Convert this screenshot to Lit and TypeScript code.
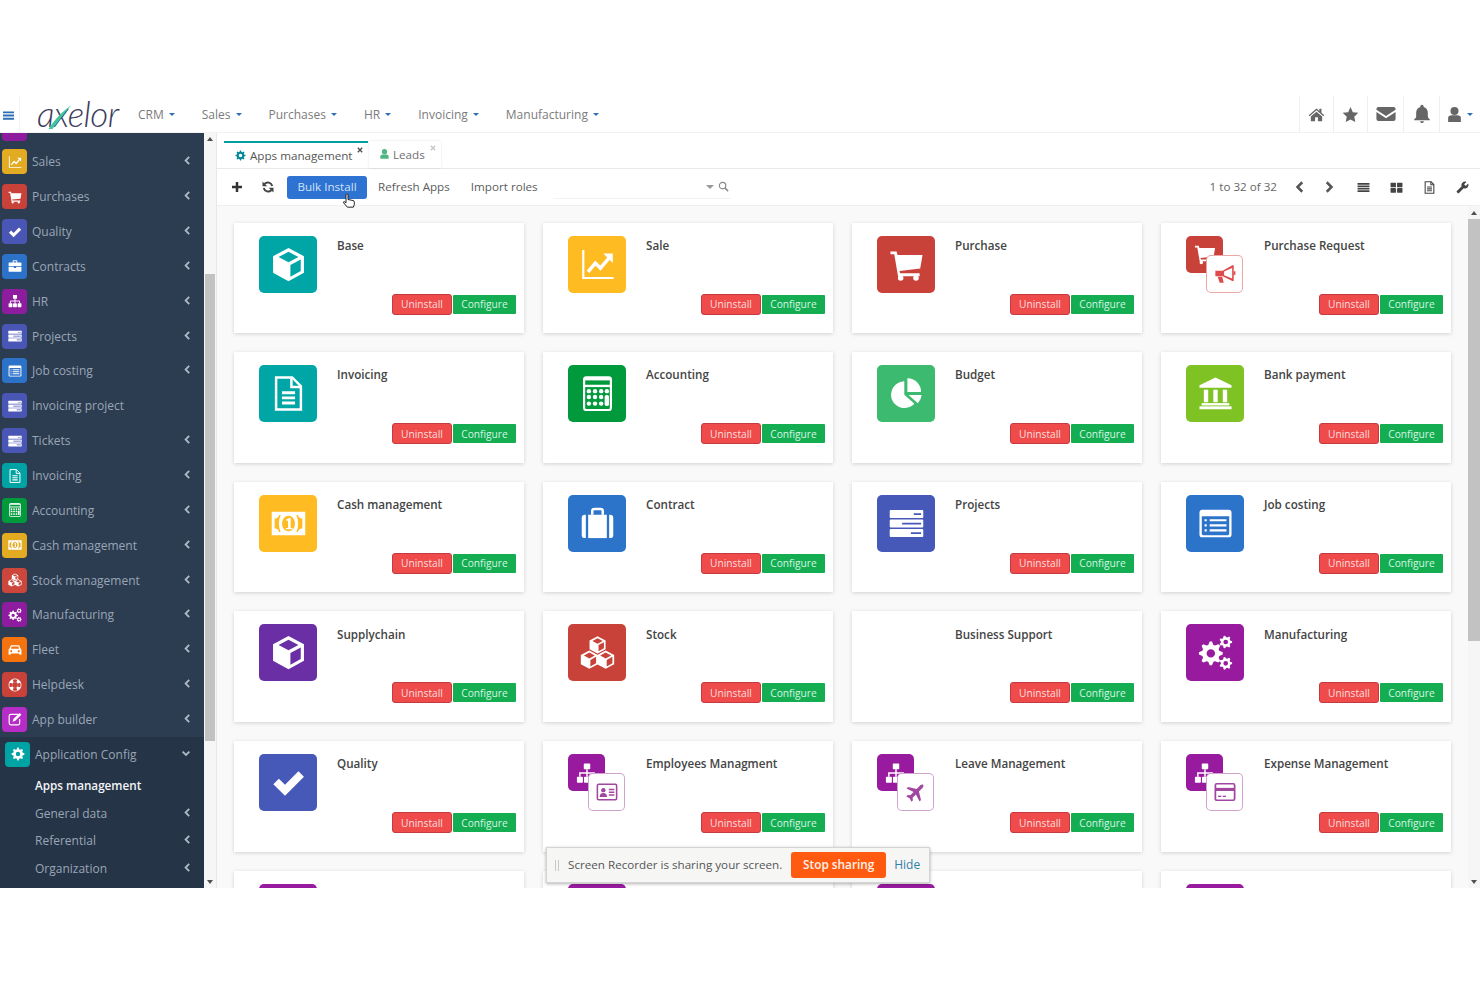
import { LitElement, html, css, svg } from "lit";
import { customElement } from "lit/decorators.js";

function gearPath(cx: number, cy: number, r: number, hole: number, teeth = 8) {
  const pts: string[] = [];
  const n = teeth * 4;
  for (let i = 0; i < n; i++) {
    const a = ((i - 0.5) / n) * Math.PI * 2;
    const outer = i % 4 === 0 || i % 4 === 1;
    const rad = outer ? r : r * 0.74;
    pts.push(`${(cx + Math.cos(a) * rad).toFixed(2)} ${(cy + Math.sin(a) * rad).toFixed(2)}`);
  }
  return `M${pts.join("L")}Z M${cx - hole} ${cy}a${hole} ${hole} 0 1 0 ${hole * 2} 0a${hole} ${hole} 0 1 0 ${-hole * 2} 0Z`;
}

const cube = "M12 .6L22.6 6.3V17.7L12 23.4L1.4 17.7V6.3Z M12 3.2L5.2 6.900L12 10.500L18.800 6.900Z M13.300 12.300V20.400L20.400 16.500V8.500Z";

const icons: Record<string, unknown> = {
  cube: svg`<path fill-rule="evenodd" d=${cube}/>`,
  chart: svg`<path d="M1.5 2h1.5v18.5H23V22H1.5Z"/><path d="M5.5 17L10.5 11L14 14.5L20 7.5" fill="none" stroke="currentColor" stroke-width="2.4"/><path d="M16 4.5H22.5V11Z"/>`,
  cart: svg`<path d="M1 3h4.2l.7 2.4H23l-1.600 9.400-14.200 1.600.4 1.600H21v2H6.200L3.600 5H1Z"/><circle cx="8" cy="21.300" r="1.900"/><circle cx="18.500" cy="21.300" r="1.900"/>`,
  doc: svg`<g fill="none" stroke="currentColor" stroke-width="1.700"><path d="M3.500 1H14.500L20.500 7V23H3.500Z"/><path d="M14 1V7.500H20.500"/><path d="M7.500 11.500H16.500M7.500 15H16.500M7.500 18.500H16.500" stroke-width="2"/></g>`,
  calc: svg`<rect x="2.800" y="1" width="18.400" height="22.400" rx="1.600" fill="none" stroke="currentColor" stroke-width="1.500"/><rect x="2.800" y="1" width="18.400" height="2"/><rect x="2.800" y="6" width="18.400" height="1.600"/>
    ${[10.400, 14.400, 18.900].map((y) => [6.100, 10.300, 14.500].map((x) => svg`<circle cx=${x} cy=${y} r="1.500"/>`))}
    <circle cx="18.400" cy="10.400" r="1.500"/><rect x="16.900" y="13" width="3" height="7.500" rx="1.200"/>`,
  pie: svg`<path d="M10.500 12.800V3.600A9.200 9.200 0 1 0 17.400 19Z"/><path d="M12.600 1.600A9.400 9.400 0 0 1 22 11H12.600Z"/><path d="M13.400 13H22.400A9.400 9.400 0 0 1 19.800 18.600Z"/>`,
  bank: svg`<path d="M12 1L23 6.400V8H1V6.400Z"/><rect x="4" y="9.400" width="3" height="8.600"/><rect x="10.500" y="9.400" width="3" height="8.600"/><rect x="17" y="9.400" width="3" height="8.600"/><rect x="2.500" y="18.600" width="19" height="1.600"/><rect x="1" y="20.800" width="22" height="2"/>`,
  money: svg`<path fill-rule="evenodd" d="M.5 4H23.500V20H.5Z M12 6.600a4.400 5.400 0 1 0 .01 0Z M5.500 6.200Q5.200 8.400 2.500 8.700V15.300Q5.200 15.600 5.500 17.800H6.600Q5.400 15 5.400 12T6.600 6.200Z M18.500 6.200H17.400Q18.600 9 18.600 12T17.400 17.800H18.500Q18.800 15.600 21.500 15.300V8.700Q18.800 8.400 18.500 6.200Z"/><path d="M10.400 9.300L12.600 8.300H13.500V15H14.700V16H10.200V15H11.700V9.900L10.600 10.200Z"/>`,
  suitcase: svg`<path d="M8.400 6V3.400Q8.400 2 9.800 2H14.200Q15.600 2 15.600 3.400V6" fill="none" stroke="currentColor" stroke-width="1.700"/><rect x="5.600" y="6" width="12.800" height="16"/><path d="M4 6V22H3.400A2.200 2.200 0 0 1 1.200 19.800V8.200A2.200 2.200 0 0 1 3.400 6Z M20 6V22H20.600A2.200 2.200 0 0 0 22.800 19.800V8.200A2.200 2.200 0 0 0 20.600 6Z"/>`,
  briefcase: svg`<path fill-rule="evenodd" d="M8 6V3.500Q8 2 9.500 2H14.500Q16 2 16 3.500V6H22Q23 6 23 7V12H1V7Q1 6 2 6Z M9.700 3.700V6H14.300V3.700Z"/><path d="M1 13.400H10V15.500H14V13.400H23V20.500Q23 22 21.500 22H2.500Q1 22 1 20.500Z"/>`,
  tasks: svg`<path fill-rule="evenodd" d="M1.200 2.800H22.800Q23.500 2.800 23.500 3.500V7.600Q23.500 8.300 22.800 8.300H1.200Q.5 8.300 .5 7.600V3.500Q.5 2.800 1.200 2.800Z M17 5V6.200H22V5Z M1.200 9.300H22.800Q23.500 9.300 23.500 10V14.100Q23.500 14.800 22.800 14.800H1.200Q.5 14.800 .5 14.100V10Q.5 9.300 1.200 9.300Z M9 11.500V12.700H22V11.500Z M1.200 15.800H22.800Q23.500 15.800 23.500 16.500V20.600Q23.500 21.300 22.800 21.300H1.200Q.5 21.300 .5 20.600V16.500Q.5 15.800 1.200 15.800Z M15 18V19.200H22V18Z"/>`,
  listalt: svg`<path fill-rule="evenodd" d="M3 2.500H21Q23 2.500 23 4.500V19.500Q23 21.500 21 21.500H3Q1 21.500 1 19.500V4.500Q1 2.500 3 2.500Z M2.600 7V19Q2.600 20 3.600 20H20.400Q21.400 20 21.400 19V7Z"/><path d="M4.500 9H6V10.500H4.500Z M8 9H19.500V10.500H8Z M4.500 12.500H6V14H4.500Z M8 12.500H19.500V14H8Z M4.500 16H6V17.500H4.500Z M8 16H19.500V17.500H8Z"/>`,
  cubes: svg`<g fill-rule="evenodd"><path transform="translate(5.800 .5) scale(.52)" d=${cube}/><path transform="translate(-.2 10.300) scale(.55)" d=${cube}/><path transform="translate(11 10.300) scale(.55)" d=${cube}/></g>`,
  gears: svg`<path fill-rule="evenodd" d=${gearPath(8.800, 12.600, 8.200, 2.900)}/><path fill-rule="evenodd" d=${gearPath(19, 4.800, 4.400, 1.600, 7)}/><path fill-rule="evenodd" d=${gearPath(19, 19.400, 4.400, 1.600, 7)}/>`,
  cog: svg`<path fill-rule="evenodd" d=${gearPath(12, 12, 11, 3.800)}/>`,
  check: svg`<path d="M1.600 13.200L5.400 9.400L9.600 13.600L18.800 4.200L22.600 8L9.600 21Z"/>`,
  sitemap: svg`<rect x="8.500" y="1.500" width="7" height="6.500" rx=".8"/><rect x="1" y="16" width="6.500" height="6.500" rx=".8"/><rect x="8.700" y="16" width="6.500" height="6.500" rx=".8"/><rect x="16.500" y="16" width="6.500" height="6.500" rx=".8"/><path d="M12 8V16M4.200 16V12H19.800V16" fill="none" stroke="currentColor" stroke-width="1.600"/>`,
  bullhorn: svg`<path fill-rule="evenodd" d="M1.500 8.500H9.500L20 2.500H21.500V19.500H20L9.500 14.500H1.500Z M11 9.400V13.400L19.800 17V5.400Z"/><rect x="21.500" y="9" width="1.800" height="4"/><path d="M4 15H9L10.600 21.500H6.200Z"/>`,
  idcard: svg`<rect x="1.500" y="3.500" width="21" height="17" rx="1.400" fill="none" stroke="currentColor" stroke-width="1.700"/><circle cx="8" cy="10" r="2.400"/><path d="M4 17.500Q4 13 8 13T12 17.500Z"/><path d="M14 8.500H20V10H14Z M14 11.500H20V13H14Z M14 14.500H20V16H14Z"/>`,
  plane: svg`<path transform="rotate(45 12 12)" d="M22 16.500v-2.200l-8.200-5V3.500C13.800 2.500 13 1 12 1s-1.800 1.500-1.800 2.500v5.800L2 14.300v2.200l8.200-2.600V19l-2.200 1.700V23l4-1.200 4 1.200v-2.300L13.800 19v-5.100z"/>`,
  card: svg`<rect x="1.500" y="3" width="21" height="18" rx="1.600" fill="none" stroke="currentColor" stroke-width="1.900"/><rect x="1.500" y="7.500" width="21" height="3.400"/><rect x="4.500" y="16" width="3.500" height="1.500"/><rect x="9.500" y="16" width="3.500" height="1.500"/>`,
  car: svg`<path fill-rule="evenodd" d="M6 4H18Q19.500 4 20 5.500L21.600 10Q23 10.800 23 12.500V20H19.500V18H4.500V20H1V12.500Q1 10.800 2.400 10L4 5.500Q4.500 4 6 4Z M6.200 6.200L5 10H19L17.800 6.200Z M5.500 12.200a1.800 1.800 0 1 0 .01 0Z M18.500 12.200a1.800 1.800 0 1 0 .01 0Z"/>`,
  lifering: svg`<path fill-rule="evenodd" d="M12 1a11 11 0 1 0 .01 0Z M12 7a5 5 0 1 0 .01 0Z M8 3.200L9.600 7.400H14.400L16 3.200A10 10 0 0 0 8 3.200Z M3.200 8L7.400 9.600V14.400L3.200 16A10 10 0 0 1 3.200 8Z M20.800 8L16.600 9.600V14.400L20.800 16A10 10 0 0 0 20.800 8Z M8 20.800L9.600 16.600H14.400L16 20.800A10 10 0 0 1 8 20.800Z"/>`,
  edit: svg`<path d="M18 4H5Q2 4 2 7V19Q2 22 5 22H17Q20 22 20 19V12" fill="none" stroke="currentColor" stroke-width="2"/><path d="M20 1.500L23 4.500L12.500 15L8 16.500L9.500 11.500Z"/>`,
  home: svg`<path d="M12 3.500L1 13l1.200 1.400L12 6l9.800 8.400L23 13l-4-3.500V4h-3v3Z"/><path d="M12 8L4 14.800V21.500H10V16H14V21.500H20V14.800Z"/>`,
  star: svg`<path d="M12 1.500L15.300 8.700L23 9.600L17.300 15L18.800 22.700L12 18.900L5.200 22.700L6.700 15L1 9.600L8.700 8.700Z"/>`,
  mail: svg`<path d="M3 3.500H21Q23.500 3.500 23.500 6V7L12 14.500L.5 7V6Q.5 3.500 3 3.500Z"/><path d="M.5 9.500L12 17L23.500 9.500V18Q23.500 20.500 21 20.500H3Q.5 20.500 .5 18Z"/>`,
  bell: svg`<path d="M12 22.800c1.300 0 2.300-1 2.300-2.200H9.700c0 1.200 1 2.200 2.300 2.200zM19 15V10.500c0-3.500-2-6-5-6.800V3c0-1.100-.9-2-2-2s-2 .9-2 2v.7c-3 .8-5 3.300-5 6.800V15c0 1.200-1 2.500-2.500 3.500V19.500h19V18.500C20 17.500 19 16.200 19 15z"/>`,
  user: svg`<circle cx="12" cy="7" r="5.700"/><path d="M3 22.500V17Q3 13 8 13H16Q21 13 21 17V22.500Z"/>`,
  list: svg`<path d="M1 3.500H23V7H1Z M1 8.500H23V11H1Z M1 12.500H23V15.500H1Z M1 17H23V20.500H1Z"/>`,
  grid: svg`<rect x="1" y="3" width="10" height="8.500" rx=".8"/><rect x="13" y="3" width="10" height="8.500" rx=".8"/><rect x="1" y="13" width="10" height="8.500" rx=".8"/><rect x="13" y="13" width="10" height="8.500" rx=".8"/>`,
  wrench: svg`<path transform="matrix(-1 0 0 1 24 0)" d="M22.700 19l-9.100-9.100c.9-2.300.4-5-1.500-6.900-2-2-5-2.400-7.400-1.300L9 6 6 9 1.600 4.700C.4 7.100.9 10.100 2.900 12.100c1.900 1.900 4.600 2.400 6.900 1.500l9.100 9.100c.4.4 1 .4 1.400 0l2.300-2.300c.5-.4.5-1.100.1-1.400z"/>`,
  plus: svg`<path d="M9.500 2H14.500V9.500H22V14.500H14.500V22H9.500V14.500H2V9.500H9.500Z"/>`,
  refresh: svg`<path d="M20.500 10A9 9 0 0 0 5 6" fill="none" stroke="currentColor" stroke-width="3.800"/><path d="M3.500 14A9 9 0 0 0 19 18" fill="none" stroke="currentColor" stroke-width="3.800"/><path d="M1 1V10.500H10.500Z M23 23V13.500H13.500Z"/>`,
  search: svg`<circle cx="10" cy="10" r="7" fill="none" stroke="currentColor" stroke-width="2.600"/><path d="M15 15L22 22" stroke="currentColor" stroke-width="3.400" fill="none"/>`,
  bars: svg`<path d="M0 3H24V7H0Z M0 10H24V14H0Z M0 17H24V21H0Z"/>`,
  left: svg`<path d="M16.500 2.500L7 12L16.500 21.500" fill="none" stroke="currentColor" stroke-width="5"/>`,
  right: svg`<path d="M7.500 2.500L17 12L7.500 21.500" fill="none" stroke="currentColor" stroke-width="5"/>`,
  down: svg`<path d="M3 7L12 16L21 7" fill="none" stroke="currentColor" stroke-width="5"/>`,
  close: svg`<path d="M4 7L7 4L12 9L17 4L20 7L15 12L20 17L17 20L12 15L7 20L4 17L9 12Z"/>`,
  hand: svg`<path d="M9.500 22L4 15.500Q3 13.800 4.800 13.500L7.500 15.500V4Q7.500 2 9 2T10.500 4V10.500L18 12Q20 12.500 20 14.500V18L18.500 22Z" fill="#fff" stroke="#222" stroke-width="1.500"/>`,
  file: svg`<g fill="none" stroke="currentColor" stroke-width="2"><path d="M4 1.500H15L20 6.500V22.500H4Z"/><path d="M14.500 1.500V7H20"/><path d="M7.500 11H16.500M7.500 14.500H16.500M7.500 18H16.500"/></g>`,
};

const ic = (name: string) => html`<svg class="i" viewBox="0 0 24 24" fill="currentColor" aria-hidden="true">${icons[name]}</svg>`;

interface Side { n: string; c: string; i: string; chev?: boolean }
const side: Side[] = [
  { n: "Sales", c: "#e3ab22", i: "chart" },
  { n: "Purchases", c: "#c9423a", i: "cart" },
  { n: "Quality", c: "#4a56b6", i: "check" },
  { n: "Contracts", c: "#2c72c9", i: "briefcase" },
  { n: "HR", c: "#8d1c9e", i: "sitemap" },
  { n: "Projects", c: "#4a56b6", i: "tasks" },
  { n: "Job costing", c: "#2c72c9", i: "listalt" },
  { n: "Invoicing project", c: "#4a56b6", i: "tasks", chev: false },
  { n: "Tickets", c: "#4a56b6", i: "tasks" },
  { n: "Invoicing", c: "#00a3a3", i: "doc" },
  { n: "Accounting", c: "#009a3d", i: "calc" },
  { n: "Cash management", c: "#e3ab22", i: "money" },
  { n: "Stock management", c: "#cc463c", i: "cubes" },
  { n: "Manufacturing", c: "#8d1c9e", i: "gears" },
  { n: "Fleet", c: "#f4730f", i: "car" },
  { n: "Helpdesk", c: "#c9423a", i: "lifering" },
  { n: "App builder", c: "#b52cc6", i: "edit" },
];

interface App { n: string; c?: string; i?: string; o?: string; oc?: string }
const P = "#981b9f";
const apps: App[] = [
  { n: "Base", c: "#00a6a6", i: "cube" },
  { n: "Sale", c: "#ffbb22", i: "chart" },
  { n: "Purchase", c: "#c9423a", i: "cart" },
  { n: "Purchase Request", c: "#c9423a", i: "cart", o: "bullhorn", oc: "#dd4b4b" },
  { n: "Invoicing", c: "#00a6a6", i: "doc" },
  { n: "Accounting", c: "#009a3d", i: "calc" },
  { n: "Budget", c: "#3cba6f", i: "pie" },
  { n: "Bank payment", c: "#7fc224", i: "bank" },
  { n: "Cash management", c: "#ffbb22", i: "money" },
  { n: "Contract", c: "#2b74c9", i: "suitcase" },
  { n: "Projects", c: "#4658b8", i: "tasks" },
  { n: "Job costing", c: "#2b74c9", i: "listalt" },
  { n: "Supplychain", c: "#6b2fa5", i: "cube" },
  { n: "Stock", c: "#c9423a", i: "cubes" },
  { n: "Business Support" },
  { n: "Manufacturing", c: P, i: "gears" },
  { n: "Quality", c: "#4658b8", i: "check" },
  { n: "Employees Managment", c: P, i: "sitemap", o: "idcard", oc: "#a2479f" },
  { n: "Leave Management", c: P, i: "sitemap", o: "plane", oc: "#a2479f" },
  { n: "Expense Management", c: P, i: "sitemap", o: "card", oc: "#a2479f" },
  { n: "", c: P, i: "sitemap" },
  { n: "", c: P, i: "sitemap" },
  { n: "", c: P, i: "sitemap" },
  { n: "", c: P, i: "sitemap" },
];

@customElement("app-root")
export class AppRoot extends LitElement {
  static styles = css`
    :host { display: block; height: 987px; background: #fff; font-family: "Open Sans", sans-serif; font-size: 12px; color: #555; overflow: hidden; }
    .app { position: relative; height: 987px; display: flex; flex-direction: column; }
    .gap { height: 96px; flex: none; }
    .i { display: block; width: 100%; height: 100%; }

    .nav { flex: none; height: 37px; display: flex; align-items: stretch; background: #fff; box-sizing: border-box; border-bottom: 1px solid #f2f2f2; }
    .burger { width: 20px; box-sizing: border-box; border-right: 1px solid #f4f4f4; display: flex; align-items: center; padding: 2px 0 0 3px; color: #2d6fb4; }
    .burger span { width: 11px; height: 11px; }
    .logo { width: 118px; box-sizing: border-box; padding-left: 17px; position: relative; font-family: Lato, sans-serif; font-style: italic; font-weight: 300; font-size: 35px; line-height: 34px; color: #3c3a5c; letter-spacing: -0.6px; }
    .swoosh { position: absolute; left: 27px; top: 9px; width: 25px; height: 24px; }
    .menu { display: flex; align-items: center; gap: 27px; flex: 1; }
    .menu div { display: flex; align-items: center; gap: 5px; color: #7b7b7b; font-size: 12px; }
    .caret { width: 0; height: 0; border-left: 3.500px solid transparent; border-right: 3.500px solid transparent; border-top: 3.500px solid #2d6fb4; }
    .nr { display: flex; }
    .nr > div { border-left: 1px solid #efefef; display: flex; align-items: center; justify-content: center; color: #666; height: 36px; box-sizing: border-box; }
    .nr .s { width: 17px; height: 17px; }
    .nr .l { width: 20px; height: 20px; }
    .nr .w34 { width: 34px; }
    .nr .w36 { width: 36px; }
    .user { gap: 4px; width: 41px; padding-right: 1px; }

    .body { flex: none; height: 755px; display: flex; overflow: hidden; }
    .sidebar { width: 204px; flex: none; background: #2c3c51; display: flex; flex-direction: column; overflow: hidden; color: #9aa6b5; font-size: 12px; }
    .partial { height: 11.500px; flex: none; display: flex; align-items: flex-end; padding: 0 0 4px 2px; box-sizing: border-box; overflow: hidden; }
    .partial span { width: 25px; height: 25px; border-radius: 4px; background: #8d1c9e; flex: none; }
    .row { height: 34.850px; flex: none; display: flex; align-items: center; padding-left: 2px; box-sizing: border-box; }
    .tile { width: 25px; height: 25px; border-radius: 4px; color: #fff; display: flex; align-items: center; justify-content: center; flex: none; margin-right: 5px; }
    .tile span { width: 14px; height: 14px; }
    .row .lbl { flex: 1; }
    .chev { width: 9px; height: 9px; margin-right: 12px; color: #aeb8c4; margin-top: -2px; }
    .config { background: #263448; flex: 1; }
    .config .row { padding-left: 5px; }
    .config .row .chev { width: 10px; height: 9px; margin-right: 13px; }
    .sub { height: 27.700px; display: flex; align-items: center; padding-left: 35px; box-sizing: border-box; }
    .sub .lbl { flex: 1; }
    .sub.on { color: #f2f4f6; font-weight: 600; height: 27.500px; font-size: 11.700px; }

    .sb { width: 12px; flex: none; background: #f6f6f6; display: flex; flex-direction: column; align-items: center; }
    .sb .a { height: 13px; flex: none; display: flex; align-items: center; justify-content: center; }
    .sb .up { width: 0; height: 0; border-left: 3.500px solid transparent; border-right: 3.500px solid transparent; border-bottom: 4px solid #505050; }
    .sb .dn { width: 0; height: 0; border-left: 3.500px solid transparent; border-right: 3.500px solid transparent; border-top: 4px solid #505050; }
    .sb .t { width: 100%; background: #c2c2c2; flex: none; }
    .sb .fill { flex: 1; }
    .sb.left { width: 13px; border-right: 1px solid #e8e8e8; box-sizing: border-box; }
    .sb.left .t { width: 10px; height: 467px; margin-top: 129px; }
    .sb.left .a { height: 12px; }
    .sb.right .t { height: 422px; }

    .main { flex: 1; min-width: 0; display: flex; flex-direction: column; background: #fff; font-size: 11.650px; }
    .tabs { flex: none; height: 36px; box-sizing: border-box; border-bottom: 1px solid #e9e9e9; padding: 8px 0 0 7px; display: flex; }
    .tab { position: relative; height: 27px; box-sizing: border-box; display: flex; align-items: center; padding-bottom: 1px; }
    .tab.on { width: 144px; border-top: 2px solid #00a0a0; padding-left: 11px; color: #555; background: #fff; }
    .tab.off { width: 72px; margin-left: 1px; padding-left: 10px; box-shadow: 0 0 2px rgba(0,0,0,.12); color: #707070; }
    .tab .ti { width: 11px; height: 11px; margin-right: 4px; flex: none; color: #00899a; }
    .tab.off .ti { width: 11px; height: 12px; margin-right: 3px; color: #4fb583; }
    .tab .x { position: absolute; width: 8px; height: 8px; top: 3px; right: 4px; color: #555; }
    .tab.off .x { color: #c6c6c6; top: 3px; right: 4px; }

    .tools { flex: none; height: 37px; box-sizing: border-box; border-bottom: 1px solid #efefef; display: flex; align-items: center; padding: 0 1px 0 14px; color: #555; }
    .tools .ib { width: 12px; height: 12px; color: #333; }
    .tools .r { margin: 0 13px 0 19px; color: #444; }
    .btn { width: 80px; height: 23px; box-sizing: border-box; padding-bottom: 1px; background: #2e72d2; color: #cfe3f8; border-radius: 3px; display: flex; align-items: center; justify-content: center; }
    .link { margin: -1px 0 0 11px; white-space: nowrap; color: #5c5c5c; }
    .link + .link { margin-left: 21px; }
    .search { margin-left: 15px; width: 178px; height: 24px; box-sizing: border-box; border-bottom: 1px solid #f3f3f3; display: flex; align-items: center; justify-content: flex-end; gap: 4px; padding-right: 2px; color: #8a8a8a; }
    .search .dc { width: 0; height: 0; border-left: 4px solid transparent; border-right: 4px solid transparent; border-top: 4px solid #999; }
    .search span.m { width: 11px; height: 11px; }
    .pager { margin-left: auto; margin-right: 8px; margin-top: -1px; color: #666; }
    .pb { width: 29px; height: 16px; display: flex; justify-content: center; align-items: center; color: #555; }
    .pb span { width: 12px; height: 14px; }
    .vb { width: 33px; display: flex; justify-content: center; color: #444; }
    .vb span { width: 13px; height: 13px; }
    .vb.lst { margin-left: 4px; }

    .work { flex: 1; min-height: 0; display: flex; }
    .content { flex: 1; min-width: 0; background: #f9f9f9; overflow: hidden; padding: 16.700px 0 0 17px; box-sizing: border-box; }
    .grid { display: grid; grid-template-columns: repeat(4, 290px); column-gap: 19px; row-gap: 19px; grid-auto-rows: 110.600px; }
    .appc { background: #fff; box-shadow: 0 1px 4px rgba(0,0,0,.16); padding: 13px 8px 0 25px; display: flex; flex-direction: column; box-sizing: border-box; }
    .top { display: flex; height: 57px; flex: none; }
    .ic { width: 58px; height: 57px; border-radius: 5px; color: #fff; display: flex; align-items: center; justify-content: center; flex: none; }
    .ic span { width: 35px; height: 35px; }
    .dual { width: 58px; height: 57px; flex: none; position: relative; }
    .d1 { position: absolute; left: 0; top: 0; width: 37px; height: 37px; border-radius: 5px; color: #fff; display: flex; align-items: center; justify-content: center; }
    .d1 span { width: 22px; height: 22px; }
    .d2 { position: absolute; left: 20px; top: 19px; width: 37px; height: 38px; box-sizing: border-box; border-radius: 5px; background: #fff; border: 1px solid; display: flex; align-items: center; justify-content: center; }
    .d2 span { width: 22px; height: 22px; }
    .tt { margin: 2.200px 0 0 20px; font-weight: 600; color: #444; line-height: 16px; white-space: nowrap; }
    .acts { display: flex; justify-content: flex-end; align-items: center; gap: 1px; margin-top: 1px; font-size: 10.200px; color: #fff; }
    .u { width: 60px; height: 21px; box-sizing: border-box; background: #ef4b4b; border: 1px solid #c43a40; border-radius: 3px; display: flex; align-items: center; justify-content: center; color: #fbdede; }
    .c { width: 63px; height: 19px; background: #14ad52; border-radius: 1px; display: flex; align-items: center; justify-content: center; color: #d8f5e3; }

    .share { position: absolute; left: 546px; top: 847px; width: 384px; height: 36px; box-sizing: border-box; background: #f6f6f5; border: 1px solid #d4d4d4; box-shadow: 0 1px 3px rgba(0,0,0,.3); display: flex; align-items: center; padding-left: 8px; color: #555; font-size: 11.650px; white-space: nowrap; }
    .share .msg { margin-top: -2px; }
    .grip { width: 4px; height: 11px; border-left: 1px solid #c9c9c9; border-right: 1px solid #c9c9c9; box-sizing: border-box; margin-right: 9px; }
    .stop { margin-left: 9px; width: 95px; height: 26px; border-radius: 3px; background: #ff5a0f; color: #fff2ea; font-weight: 600; display: flex; align-items: center; justify-content: center; font-size: 11.800px; padding-bottom: 2px; box-sizing: border-box; }
    .hide { margin-left: 8px; color: #2f7fa8; font-size: 12px; margin-top: -2px; }
    .hand { position: absolute; left: 341px; top: 192px; width: 16px; height: 17px; }
  `;

  private sideRow(s: Side) {
    return html`<div class="row">
      <div class="tile" style="background:${s.c}"><span>${ic(s.i)}</span></div>
      <span class="lbl">${s.n}</span>
      ${s.chev === false ? "" : html`<span class="chev">${ic("left")}</span>`}
    </div>`;
  }

  private appIcon(a: App) {
    if (!a.i) return html`<div class="dual"></div>`;
    if (a.o) {
      return html`<div class="dual">
        <div class="d1" style="background:${a.c}"><span>${ic(a.i)}</span></div>
        <div class="d2" style="color:${a.oc};border-color:${a.oc}80"><span>${ic(a.o)}</span></div>
      </div>`;
    }
    return html`<div class="ic" style="background:${a.c}"><span>${ic(a.i)}</span></div>`;
  }

  render() {
    return html`<div class="app">
      <div class="gap"></div>
      <div class="nav">
        <div class="burger"><span>${ic("bars")}</span></div>
        <div class="logo">axelor
          <svg class="swoosh" viewBox="0 0 24 24" aria-hidden="true"><path d="M1 24C7 15 14 7 24 0C17 8 11 16 5 24Z" fill="#3fc79a"/></svg>
        </div>
        <div class="menu">
          ${["CRM", "Sales", "Purchases", "HR", "Invoicing", "Manufacturing"].map((m) => html`<div>${m}<span class="caret"></span></div>`)}
        </div>
        <div class="nr">
          <div class="w34"><span class="s">${ic("home")}</span></div>
          <div class="w34"><span class="s">${ic("star")}</span></div>
          <div class="w36"><span class="l">${ic("mail")}</span></div>
          <div class="w36"><span class="l">${ic("bell")}</span></div>
          <div class="user"><span class="s">${ic("user")}</span><span class="caret"></span></div>
        </div>
      </div>

      <div class="body">
        <div class="sidebar">
          <div class="partial"><span></span></div>
          ${side.map((s) => this.sideRow(s))}
          <div class="config">
            <div class="row">
              <div class="tile" style="background:#00a3a3"><span>${ic("cog")}</span></div>
              <span class="lbl">Application Config</span>
              <span class="chev">${ic("down")}</span>
            </div>
            <div class="sub on"><span class="lbl">Apps management</span></div>
            ${["General data", "Referential", "Organization"].map((n) => html`<div class="sub"><span class="lbl">${n}</span><span class="chev">${ic("left")}</span></div>`)}
          </div>
        </div>
        <div class="sb left">
          <div class="a"><span class="up"></span></div>
          <div class="t"></div>
          <div class="fill"></div>
          <div class="a"><span class="dn"></span></div>
        </div>

        <div class="main">
          <div class="tabs">
            <div class="tab on"><span class="ti">${ic("cog")}</span>Apps management<span class="x">${ic("close")}</span></div>
            <div class="tab off"><span class="ti">${ic("user")}</span>Leads<span class="x">${ic("close")}</span></div>
          </div>
          <div class="tools">
            <span class="ib">${ic("plus")}</span>
            <span class="ib r">${ic("refresh")}</span>
            <div class="btn">Bulk Install</div>
            <span class="link">Refresh Apps</span>
            <span class="link">Import roles</span>
            <div class="search"><span class="dc"></span><span class="m">${ic("search")}</span></div>
            <span class="pager">1 to 32 of 32</span>
            <div class="pb"><span>${ic("left")}</span></div>
            <div class="pb"><span>${ic("right")}</span></div>
            <div class="vb lst"><span>${ic("list")}</span></div>
            <div class="vb"><span>${ic("grid")}</span></div>
            <div class="vb"><span>${ic("file")}</span></div>
            <div class="vb"><span>${ic("wrench")}</span></div>
          </div>
          <div class="work">
            <div class="content">
              <div class="grid">
                ${apps.map((a) => html`<div class="appc">
                  <div class="top">${this.appIcon(a)}${a.n ? html`<div class="tt">${a.n}</div>` : ""}</div>
                  ${a.n ? html`<div class="acts"><div class="u">Uninstall</div><div class="c">Configure</div></div>` : ""}
                </div>`)}
              </div>
            </div>
            <div class="sb right">
              <div class="a"><span class="up"></span></div>
              <div class="t"></div>
              <div class="fill"></div>
              <div class="a"><span class="dn"></span></div>
            </div>
          </div>
        </div>
      </div>

      <div class="share">
        <span class="grip"></span>
        <span class="msg">Screen Recorder is sharing your screen.</span>
        <div class="stop">Stop sharing</div>
        <span class="hide">Hide</span>
      </div>
      <span class="hand">${ic("hand")}</span>
    </div>`;
  }
}
